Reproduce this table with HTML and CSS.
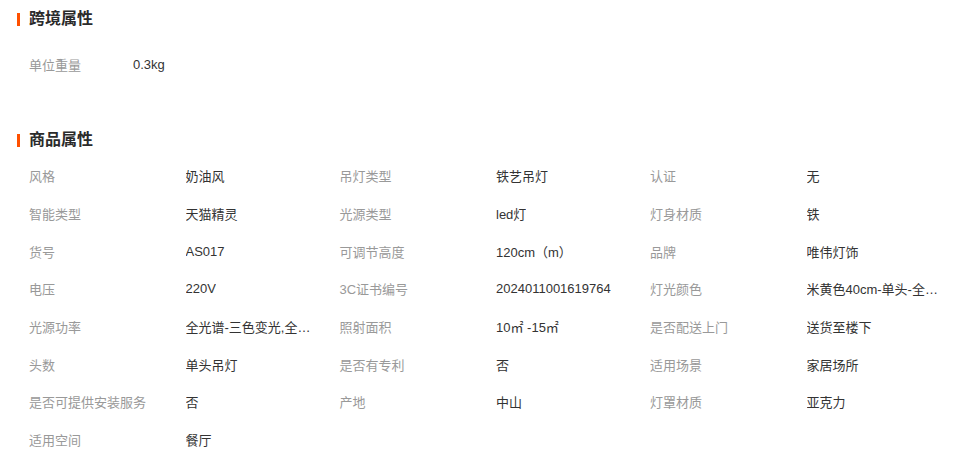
FILE: index.html
```html
<!DOCTYPE html>
<html lang="zh-CN">
<head>
<meta charset="utf-8">
<title>属性</title>
<link rel="stylesheet" href="styles.css">
</head>
<body>
<section class="block block-cross">
  <h2 class="title">跨境属性</h2>
  <div class="props props-single">
    <div class="item"><span class="label">单位重量</span><span class="value value-narrow">0.3kg</span></div>
  </div>
</section>
<section class="block block-goods">
  <h2 class="title">商品属性</h2>
  <div class="props">
    <div class="item"><span class="label">风格</span><span class="value">奶油风</span></div>
    <div class="item"><span class="label">吊灯类型</span><span class="value">铁艺吊灯</span></div>
    <div class="item"><span class="label">认证</span><span class="value">无</span></div>
    <div class="item"><span class="label">智能类型</span><span class="value">天猫精灵</span></div>
    <div class="item"><span class="label">光源类型</span><span class="value">led灯</span></div>
    <div class="item"><span class="label">灯身材质</span><span class="value">铁</span></div>
    <div class="item"><span class="label">货号</span><span class="value">AS017</span></div>
    <div class="item"><span class="label">可调节高度</span><span class="value">120cm（m）</span></div>
    <div class="item"><span class="label">品牌</span><span class="value">唯伟灯饰</span></div>
    <div class="item"><span class="label">电压</span><span class="value">220V</span></div>
    <div class="item"><span class="label">3C证书编号</span><span class="value">2024011001619764</span></div>
    <div class="item"><span class="label">灯光颜色</span><span class="value">米黄色40cm-单头-全光谱三色变光</span></div>
    <div class="item"><span class="label">光源功率</span><span class="value">全光谱-三色变光,全光谱-无极调光</span></div>
    <div class="item"><span class="label">照射面积</span><span class="value">10㎡ -15㎡</span></div>
    <div class="item"><span class="label">是否配送上门</span><span class="value">送货至楼下</span></div>
    <div class="item"><span class="label">头数</span><span class="value">单头吊灯</span></div>
    <div class="item"><span class="label">是否有专利</span><span class="value">否</span></div>
    <div class="item"><span class="label">适用场景</span><span class="value">家居场所</span></div>
    <div class="item"><span class="label">是否可提供安装服务</span><span class="value">否</span></div>
    <div class="item"><span class="label">产地</span><span class="value">中山</span></div>
    <div class="item"><span class="label">灯罩材质</span><span class="value">亚克力</span></div>
    <div class="item"><span class="label">适用空间</span><span class="value">餐厅</span></div>
  </div>
</section>
</body>
</html>
```

FILE: styles.css
```css
html, body {
  margin: 0;
  padding: 0;
  background: #ffffff;
}

body {
  font-family: "Liberation Sans", "Noto Sans CJK SC", sans-serif;
  font-size: 13px;
  color: #333333;
}

.block-cross {
  padding-top: 8px;
}

.block-goods {
  margin-top: 46px;
}

.title {
  display: flex;
  align-items: center;
  gap: 9px;
  margin: 0;
  padding-left: 17px;
  height: 22px;
  font-size: 16px;
  font-weight: bold;
  line-height: 22px;
  color: #2b2b2b;
}

.title::before {
  content: "";
  display: block;
  width: 3px;
  height: 13px;
  background: #ff5000;
}

.props {
  display: grid;
  grid-template-columns: repeat(3, 310.5px);
  grid-auto-rows: 37.7px;
  padding-left: 29px;
  margin-top: 6px;
}

.props-single {
  grid-auto-rows: 38px;
  margin-top: 15px;
}

.item {
  display: flex;
  align-items: center;
  min-width: 0;
}

.label {
  flex: 0 0 156.5px;
  color: #999999;
  white-space: nowrap;
}

.value-narrow {
  margin-left: -52.5px;
}

.value {
  max-width: 133px;
  color: #333333;
  white-space: nowrap;
  overflow: hidden;
  text-overflow: ellipsis;
}
```
